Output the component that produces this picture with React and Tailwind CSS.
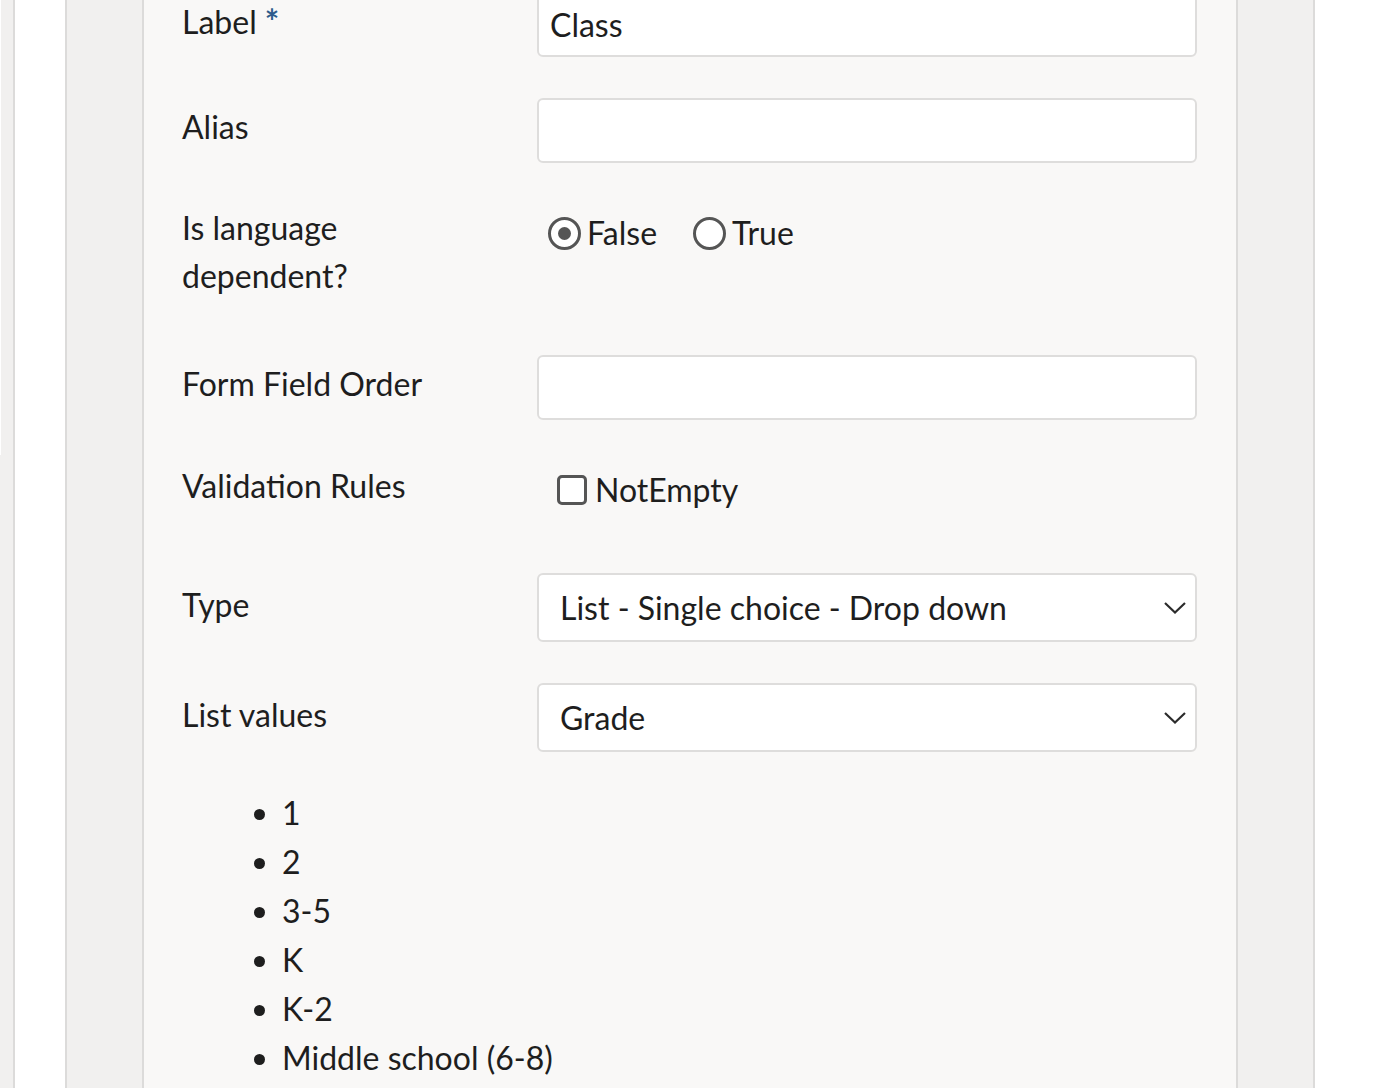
import { useState } from 'react'

const font = { fontFamily: 'Lato, "Noto Sans", sans-serif' }

function Chevron() {
  return (
    <svg width="22" height="12" viewBox="0 0 22 12" fill="none" className="shrink-0">
      <polyline points="1,1 11,10.5 21,1" stroke="#2b2b2b" strokeWidth="2.2" />
    </svg>
  )
}

function Row({ label, required, labelPad = 'pt-[5px]', className = '', children }) {
  return (
    <div className={`flex items-start ${className}`}>
      <div className={`w-[355px] shrink-0 leading-[48px] ${labelPad}`}>
        {label}
        {required && <span className="ml-[8px] font-bold text-[34px] text-[#2d5c8c]">*</span>}
      </div>
      <div className="flex-1">{children}</div>
    </div>
  )
}

function TextInput({ value }) {
  return (
    <div className="h-[65px] rounded-[6px] border-2 border-[#dedddc] bg-white px-[11px] flex items-center leading-[48px]">
      {value}
    </div>
  )
}

function Select({ value }) {
  return (
    <div className="h-[69px] rounded-[6px] border-2 border-[#dedddc] bg-white pl-[21px] pr-[9px] flex items-center justify-between leading-[48px] whitespace-nowrap">
      <span>{value}</span>
      <Chevron />
    </div>
  )
}

function Radio({ checked, label, onClick }) {
  return (
    <button type="button" onClick={onClick} className="flex items-center">
      <span className="w-[33px] h-[33px] rounded-full border-[3px] border-[#555] bg-white flex items-center justify-center mr-[6px]">
        {checked && <span className="w-[13px] h-[13px] rounded-full bg-[#555]" />}
      </span>
      <span>{label}</span>
    </button>
  )
}

export default function App() {
  const [lang, setLang] = useState(false)
  const [notEmpty, setNotEmpty] = useState(false)
  const values = ['1', '2', '3-5', 'K', 'K-2', 'Middle school (6-8)']

  return (
    <div className="flex h-[1088px] w-full overflow-hidden bg-white text-[32px] text-[#1e1e1e]" style={font}>
      {/* side rails */}
      <div className="w-[13px] shrink-0 bg-[#f1f0ef] flex">
        <div className="w-px h-[455px] bg-white" />
      </div>
      <div className="w-[2px] shrink-0 bg-[#dcdbda]" />
      <div className="w-[50px] shrink-0 bg-white" />
      <div className="w-[2px] shrink-0 bg-[#dcdbda]" />
      <div className="w-[75px] shrink-0 bg-[#f1f0ef]" />
      <div className="w-[2px] shrink-0 bg-[#dcdbda]" />

      {/* form panel */}
      <div className="w-[1092px] shrink-0 bg-[#f9f8f7] pl-[38px] pr-[39px]">
        <Row label="Label" required className="mt-[-8px]">
          <TextInput value="Class" />
        </Row>
        <Row label="Alias" className="mt-[41px]">
          <TextInput value="" />
        </Row>
        <Row label={<>Is language<br />dependent?</>} labelPad="" className="mt-[41px]">
          <div className="flex gap-[36px] pt-[5px] pl-[11px] leading-[48px]">
            <Radio checked={!lang} label="False" onClick={() => setLang(false)} />
            <Radio checked={lang} label="True" onClick={() => setLang(true)} />
          </div>
        </Row>
        <Row label="Form Field Order" className="mt-[55px]">
          <TextInput value="" />
        </Row>
        <Row label="Validation Rules" labelPad="" className="mt-[42px]">
          <button
            type="button"
            onClick={() => setNotEmpty(!notEmpty)}
            className="flex items-center pt-[4px] pl-[20px] leading-[48px]"
          >
            <span className="w-[30px] h-[30px] rounded-[5px] border-[3px] border-[#555] bg-white mr-[8px] flex items-center justify-center">
              {notEmpty && <span className="w-[14px] h-[14px] bg-[#555]" />}
            </span>
            <span>NotEmpty</span>
          </button>
        </Row>
        <Row label="Type" labelPad="pt-[8px]" className="mt-[59px]">
          <Select value="List - Single choice - Drop down" />
        </Row>
        <Row label="List values" labelPad="pt-[8px]" className="mt-[41px]">
          <Select value="Grade" />
        </Row>
        <ul className="mt-[36px] list-disc pl-[100px] leading-[49px]">
          {values.map((v) => (
            <li key={v}>{v}</li>
          ))}
        </ul>
      </div>

      <div className="w-[2px] shrink-0 bg-[#dcdbda]" />
      <div className="w-[75px] shrink-0 bg-[#f1f0ef]" />
      <div className="w-[2px] shrink-0 bg-[#dcdbda]" />
      <div className="flex-1 bg-white" />
    </div>
  )
}
